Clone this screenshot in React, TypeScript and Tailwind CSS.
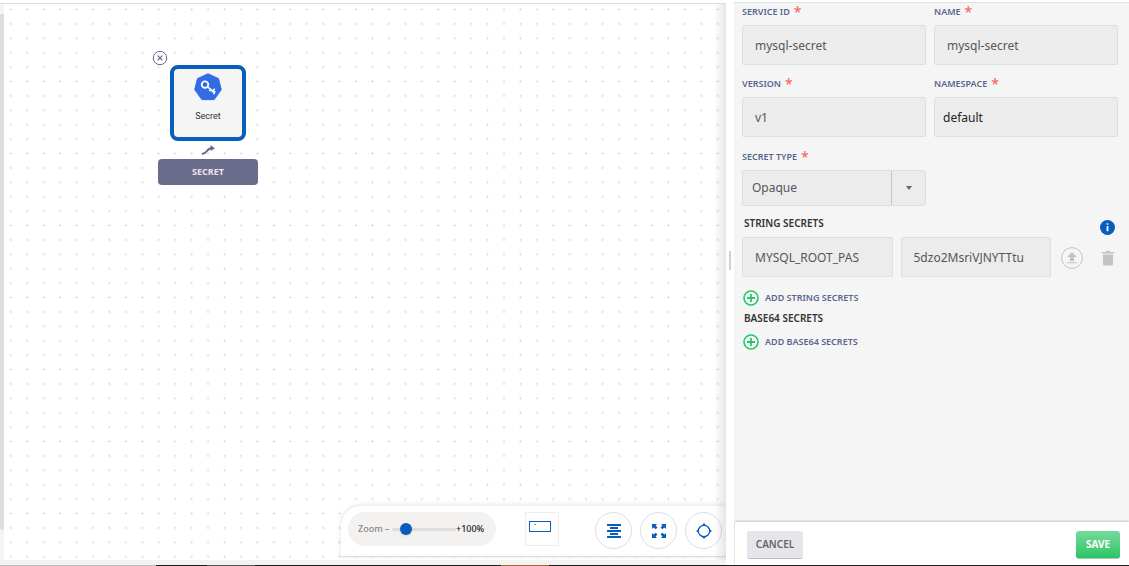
import { useState, type ReactNode } from "react";

const labelText = "text-[9px] leading-[18px] font-semibold text-[#5a6690]";

function Label({ htmlFor, children }: { htmlFor: string; children: ReactNode }) {
  return (
    <label htmlFor={htmlFor} className={`mb-1 flex h-[18px] gap-1 ${labelText}`}>
      <span>{children}</span>
      <span aria-hidden="true" className="text-sm leading-[18px] font-medium text-[#f26b6b]">*</span>
    </label>
  );
}

const inputBox =
  "h-10 w-full min-w-0 rounded-[2px] border border-[#dfdfdf] bg-[#ececec] text-xs outline-none";

function Field({ id, label, value, dark = false }: { id: string; label: string; value: string; dark?: boolean }) {
  return (
    <div>
      <Label htmlFor={id}>{label}</Label>
      <input
        id={id}
        defaultValue={value}
        className={`${inputBox} ${dark ? "px-2 text-[#222]" : "px-3 text-[#53575b]"}`}
      />
    </div>
  );
}

function AddButton({ children }: { children: ReactNode }) {
  return (
    <button type="button" className={`flex h-4 items-center gap-1.5 ${labelText}`}>
      <svg width="16" height="16" viewBox="0 0 16 16" fill="none" stroke="#28c76a" strokeWidth="1.6">
        <circle cx="8" cy="8" r="7" />
        <path d="M8 4v8M4 8h8" strokeWidth="1.8" />
      </svg>
      {children}
    </button>
  );
}

function RoundButton({ label, children }: { label: string; children: ReactNode }) {
  return (
    <button
      type="button"
      aria-label={label}
      className="flex size-[37px] shrink-0 items-center justify-center rounded-full border border-[#dedede] bg-white"
    >
      {children}
    </button>
  );
}

function SecretNode() {
  return (
    <div className="absolute top-[50px] left-[154px] w-[100px]">
      <button type="button" aria-label="Remove node" className="absolute -top-[4px] -left-[6px] block">
        <svg width="16" height="16" viewBox="0 0 16 16" fill="none" stroke="#66668a">
          <circle cx="8" cy="8" r="6.7" fill="#fff" />
          <path d="M5.7 5.7l4.6 4.6M10.3 5.7l-4.6 4.6" strokeWidth="1.2" />
        </svg>
      </button>
      <div className="mx-auto mt-[11px] flex size-[76px] flex-col items-center rounded-lg border-4 border-[#0b5dbd] bg-[#f5f5f5] pt-1">
        <svg width="28" height="28" viewBox="0 0 28 28">
          <path
            d="M14 .8 24.5 5.6 27.3 16.6 20.2 26.6H7.8L.7 16.6 3.5 5.6Z"
            fill="#326ce5"
            stroke="#326ce5"
            strokeLinejoin="round"
          />
          <g fill="none" stroke="#fff" strokeWidth="1.8">
            <circle cx="11" cy="11.6" r="3.3" />
            <path d="M13.5 13.8l7.800 6.200M17 16.300l-1.600 1.900M20.600 15.700l-2.700 3.600M21 18l-1.400 3.200" strokeWidth="1.5" />
          </g>
        </svg>
        <span className="mt-[7px] font-[Roboto,sans-serif] text-[9px] leading-4 text-[#333]">Secret</span>
      </div>
      <svg className="mx-auto my-1 block" width="14" height="10" viewBox="0 0 14 10">
        <path d="M.8 8.600C3.500 9 4.800 7.600 6 6 7.200 4.200 8.200 3.200 11 3.200" fill="none" stroke="#66668a" strokeWidth="2" />
        <path d="M9.500.3 14 3.200 9.500 6Z" fill="#66668a" />
      </svg>
      <button
        type="button"
        className="block h-[26px] w-full rounded bg-[#6b6b8c] font-['Open_Sans',sans-serif] text-[9px] leading-[26px] font-bold text-[#efe5ec]"
      >
        SECRET
      </button>
    </div>
  );
}

function Toolbar() {
  const [zoom, setZoom] = useState(15);
  return (
    <div className="absolute right-0 bottom-[3px] flex h-[51px] w-[385px] items-start rounded-tl-[20px] border-b border-[#dedede] bg-white pt-1.5 pr-1 pl-[7px] shadow-[0_-1px_5px_rgba(0,0,0,0.12)]">
      <div className="flex h-[34px] w-[148px] shrink-0 items-center rounded-full bg-[#f3f2f1] pl-2.5 text-[9px] font-medium">
        <label htmlFor="zoom" className="w-[34px] whitespace-nowrap text-[#888]">Zoom –</label>
        <input
          id="zoom"
          type="range"
          value={zoom}
          onChange={(e) => setZoom(Number(e.target.value))}
          className="h-[3px] w-16 appearance-none rounded bg-[#dddddd] [&::-webkit-slider-thumb]:size-3 [&::-webkit-slider-thumb]:appearance-none [&::-webkit-slider-thumb]:rounded-full [&::-webkit-slider-thumb]:bg-[#0b5dbd] [&::-webkit-slider-thumb]:shadow"
        />
        <span className="text-[#222]">+100%</span>
      </div>
      <div className="ml-[29px] size-[34px] shrink-0 border border-[#eeeeee] bg-white pt-2 pl-[3px]">
        <svg width="22" height="11" viewBox="0 0 22 11">
          <rect x=".5" y=".5" width="21" height="10" fill="#fff" stroke="#0b5dbd" />
          <path d="M5 3.5h2" stroke="#2fc5a5" />
        </svg>
      </div>
      <div className="ml-auto flex gap-2">
        <RoundButton label="Align nodes">
          <svg width="14" height="14" viewBox="0 0 14 14" stroke="#0b5dbd" strokeWidth="2">
            <path d="M0 1h14M3 4h8M0 7h14M3 10h8M0 13h14" />
          </svg>
        </RoundButton>
        <RoundButton label="Fit to screen">
          <svg width="14" height="14" viewBox="0 0 14 14" fill="#0b5dbd">
            <path d="M0 0h5L3.600 1.400 5.400 3.600 3.800 5.200 1.500 3.500 0 5ZM14 0v5l-1.500-1.500-2.300 1.700-1.600-1.600L10.400 1.400 9 0ZM0 14V9l1.500 1.500 2.300-1.700 1.600 1.600L3.600 12.600 5 14ZM14 14H9l1.400-1.400L8.600 10.400 10.200 8.800l2.300 1.700L14 9Z" />
          </svg>
        </RoundButton>
        <RoundButton label="Center view">
          <svg width="16" height="16" viewBox="0 0 16 16">
            <circle cx="8" cy="8" r="5.700" fill="none" stroke="#0b5dbd" strokeWidth="1.300" />
            <path d="M8 0l2.500 3h-5ZM8 16l2.500-3h-5ZM0 8l3-2v4ZM16 8l-3-2v4Z" fill="#0b5dbd" />
          </svg>
        </RoundButton>
      </div>
    </div>
  );
}

function Canvas() {
  return (
    <div className="flex min-w-0 flex-1 flex-col">
      <div className="h-[3px]" />
      <div className="flex min-h-0 flex-1 border-t border-[#dcdcdc]">
        <div className="flex w-1 flex-col bg-[#f4f4f4] pt-2.5 pb-[30px]">
          <div className="flex-1 rounded-b-sm bg-[#dedede]" />
        </div>
        <main className="relative flex-1 overflow-hidden">
          <svg className="block h-full w-full" aria-hidden="true">
            <defs>
              <pattern id="dots" width="16.44" height="14.4" patternUnits="userSpaceOnUse" x="-1.400" y="-1.700">
                <circle cx="8.200" cy="7.200" r="1" fill="#d2d2d2" />
              </pattern>
            </defs>
            <rect width="100%" height="100%" fill="url(#dots)" />
          </svg>
          <SecretNode />
          <Toolbar />
          <div className="pointer-events-none absolute inset-y-0 right-0 w-3 bg-linear-to-r from-transparent to-black/10" />
        </main>
      </div>
      <div className="h-[5px] bg-[#f3f3f3]" />
    </div>
  );
}

function SecretPanel() {
  return (
    <form className="flex w-[395px] shrink-0 flex-col bg-[#f5f5f5]" onSubmit={(e) => e.preventDefault()}>
      <div className="h-[3px] shrink-0 border-b border-[#e2e2e2] bg-white" />
      <div className="flex-1 pr-[11px] pl-2">
        <div className="grid grid-cols-2 gap-x-2 gap-y-2.5">
          <Field id="service-id" label="SERVICE ID" value="mysql-secret" />
          <Field id="name" label="NAME" value="mysql-secret" />
          <Field id="version" label="VERSION" value="v1" />
          <Field id="namespace" label="NAMESPACE" value="default" dark />
        </div>
        <div className="mt-[11px] grid grid-cols-2 gap-x-2">
          <div>
            <Label htmlFor="secret-type">SECRET TYPE</Label>
            <div className="relative">
              <select
                id="secret-type"
                className="block h-9 w-full appearance-none rounded-[2px] border border-[#dfdfdf] bg-[#ececec] px-[9px] text-xs text-[#53575b] outline-none"
              >
                <option>Opaque</option>
              </select>
              <span className="pointer-events-none absolute inset-y-px right-px flex w-[34px] items-center justify-center border-l border-[#c6c6c6]">
                <svg width="6" height="4" viewBox="0 0 6 4">
                  <path d="M0 0h6L3 4Z" fill="#666" />
                </svg>
              </span>
            </div>
          </div>
        </div>
        <div className="mt-2 flex h-[23px] items-start justify-between pr-[3px] pl-0.5">
          <h2 className="text-[10px] leading-[18px] font-semibold text-[#333]">STRING SECRETS</h2>
          <button type="button" aria-label="About string secrets" className="mt-1.5">
            <svg width="15" height="15" viewBox="0 0 15 15">
              <circle cx="7.500" cy="7.500" r="7.500" fill="#0b5dbd" />
              <path d="M7.500 3.300v1.500M7.500 6v5.300" stroke="#fff" strokeWidth="1.700" />
            </svg>
          </button>
        </div>
        <div className="flex items-center gap-2">
          <input aria-label="Secret key" defaultValue="MYSQL_ROOT_PAS" className={`${inputBox} flex-1 px-3 text-[#53575b]`} />
          <input aria-label="Secret value" defaultValue="5dzo2MsriVJNYTTtu" className={`${inputBox} flex-1 px-3 text-[#53575b]`} />
          <div className="flex w-[59px] shrink-0 items-center justify-between pt-0.5 pr-[3px] pl-0.5">
            <button type="button" aria-label="Upload value">
              <svg width="22" height="22" viewBox="0 0 22 22">
                <circle cx="11" cy="11" r="10.400" fill="none" stroke="#c3c3c3" />
                <path d="M11 5l5 5h-3v4H9v-4H6ZM6 15.200h10v1H6Z" fill="#c3c3c3" />
              </svg>
            </button>
            <button type="button" aria-label="Delete secret">
              <svg width="14" height="16" viewBox="0 0 14 16" fill="#c3c3c3">
                <path d="M1 2h3.500l1-1.300h3l1 1.300H13v1.500H1ZM2 4.500h10V14q0 1.500-1.500 1.500h-7Q2 15.500 2 14Z" />
              </svg>
            </button>
          </div>
        </div>
        <div className="mt-[13px] pl-px">
          <AddButton>ADD STRING SECRETS</AddButton>
          <h2 className="mt-[3px] pl-px text-[10px] leading-[18px] font-semibold text-[#333]">BASE64 SECRETS</h2>
          <div className="mt-[7px]">
            <AddButton>ADD BASE64 SECRETS</AddButton>
          </div>
        </div>
      </div>
      <footer className="ml-px flex h-[43px] shrink-0 items-center justify-between bg-white pt-0.5 pr-[9px] pl-3 shadow-[0_-1px_2px_rgba(0,0,0,0.2)]">
        <button type="button" className="h-7 w-14 rounded-[3px] border-b border-[#bdbdc2] bg-[#e6e5ec] text-[10px] font-semibold text-[#666]">
          CANCEL
        </button>
        <button type="submit" className="h-7 w-11 rounded-[3px] border-b border-[#a8c9b5] bg-linear-to-b from-[#74d99c] to-[#24c465] text-[10px] font-bold text-white">
          SAVE
        </button>
      </footer>
    </form>
  );
}

export default function App() {
  return (
    <div className="flex h-screen flex-col overflow-hidden bg-white font-['Noto_Sans',sans-serif]">
      <div className="flex min-h-0 flex-1">
        <Canvas />
        <div className="flex w-2 shrink-0 items-center bg-white pb-11 pl-[3px]">
          <div className="h-[19px] w-0.5 bg-[#d0d0d0]" />
        </div>
        <SecretPanel />
      </div>
      <div className="flex h-px shrink-0 bg-[#1c1c1c]">
        <div className="w-[156px] bg-[#bdbdbd]" />
        <div className="ml-[51px] w-12 bg-[#555]" />
        <div className="ml-[246px] w-12 bg-[#b5622a]" />
      </div>
    </div>
  );
}
